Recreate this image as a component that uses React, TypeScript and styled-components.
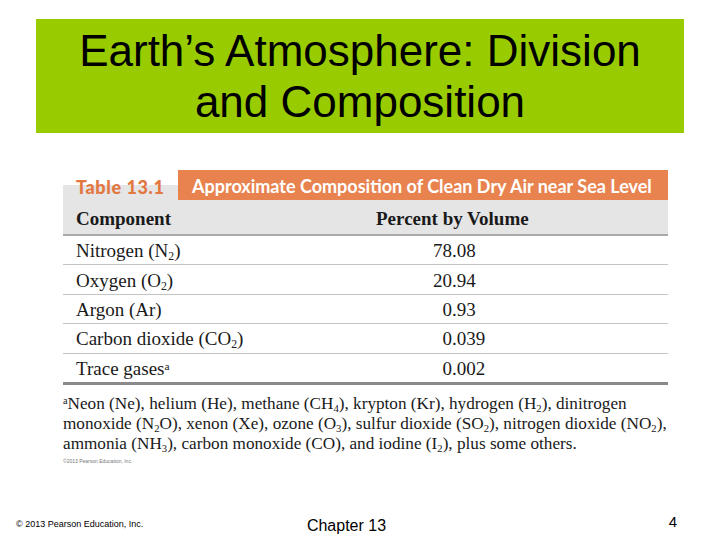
import React from "react";
import styled, { createGlobalStyle } from "styled-components";

const GlobalStyle = createGlobalStyle`
	html, body {
		margin: 0;
		padding: 0;
		background: #fff;
	}
	body {
		width: 720px;
		height: 540px;
		overflow: hidden;
		font-family: "Liberation Sans", Arial, sans-serif;
	}
`;

export default function App() {
	const rows = [
		{ name: <>Nitrogen (N<Sub>2</Sub>)</>, int: "78", frac: ".08" },
		{ name: <>Oxygen (O<Sub>2</Sub>)</>, int: "20", frac: ".94" },
		{ name: <>Argon (Ar)</>, int: "0", frac: ".93" },
		{ name: <>Carbon dioxide (CO<Sub>2</Sub>)</>, int: "0", frac: ".039" },
		{ name: <>Trace gases<Sup>a</Sup></>, int: "0", frac: ".002" },
	];

	return (
		<Slide>
			<GlobalStyle />
			<TitleBar>
				<Title>
					Earth’s Atmosphere: Division
					<br />
					and Composition
				</Title>
			</TitleBar>
			<Table>
				<Caption>
					<TableNo>Table 13.1</TableNo>
					<CaptionText>
						Approximate Composition of Clean Dry Air near Sea Level
					</CaptionText>
				</Caption>
				<HeadRow>
					<HeadCell>Component</HeadCell>
					<HeadCell>Percent by Volume</HeadCell>
				</HeadRow>
				{rows.map((r, i) => (
					<Row key={i} $last={i === rows.length - 1}>
						<Cell>{r.name}</Cell>
						<Num>
							<Int>{r.int}</Int>
							{r.frac}
						</Num>
					</Row>
				))}
				<Footnote>
					<Sup>a</Sup>Neon (Ne), helium (He), methane (CH<Sub>4</Sub>), krypton
					(Kr), hydrogen (H<Sub>2</Sub>), dinitrogen
					<br />
					monoxide (N<Sub>2</Sub>O), xenon (Xe), ozone (O<Sub>3</Sub>), sulfur
					dioxide (SO<Sub>2</Sub>), nitrogen dioxide (NO<Sub>2</Sub>),
					<br />
					ammonia (NH<Sub>3</Sub>), carbon monoxide (CO), and iodine
					(I<Sub>2</Sub>), plus some others.
				</Footnote>
				<Credit>©2013 Pearson Education, Inc.</Credit>
			</Table>
			<Footer>
				<Copyright>© 2013 Pearson Education, Inc.</Copyright>
				<Chapter>Chapter 13</Chapter>
				<PageNo>4</PageNo>
			</Footer>
		</Slide>
	);
}

const Slide = styled.div`
	width: 720px;
	height: 540px;
	display: flex;
	flex-direction: column;
	padding-top: 19px;
	box-sizing: border-box;
`;
const TitleBar = styled.div`
	margin: 0 36px;
	height: 114px;
	background: #99cc00;
	display: flex;
	align-items: center;
	justify-content: center;
`;
const Title = styled.h1`
	margin: 0;
	font-family: "Liberation Sans", Arial, sans-serif;
	font-weight: normal;
	font-size: 44px;
	line-height: 51px;
	text-align: center;
	color: #000;
`;
const Table = styled.div`
	margin: 37px 52px 0 63px;
	font-family: "Liberation Serif", "Times New Roman", serif;
	color: #1a1a1a;
`;
const Caption = styled.div`
	display: flex;
	height: 30px;
	background: linear-gradient(to bottom, #fff 0, #fff 15px, #e5e5e6 15px);
`;
const TableNo = styled.div`
	width: 115px;
	padding-left: 13px;
	box-sizing: border-box;
	font-family: "Lato", "Open Sans", sans-serif;
	font-weight: 900;
	font-size: 18px;
	color: #e2773f;
	line-height: 34px;
	letter-spacing: 0.6px;
	white-space: nowrap;
`;
const CaptionText = styled.div`
	flex: 1;
	background: #e8834f;
	color: #fff;
	font-family: "Lato", "Open Sans", sans-serif;
	font-weight: 700;
	font-size: 18px;
	line-height: 32px;
	padding-left: 14px;
	white-space: nowrap;
	overflow: hidden;
`;
const HeadRow = styled.div`
	display: grid;
	grid-template-columns: 300px 1fr;
	box-sizing: border-box;
	height: 36px;
	align-items: center;
	background: #e5e5e6;
	border-bottom: 2px solid #a9a9a9;
	padding: 3px 0 0 13px;
`;
const HeadCell = styled.div`
	font-weight: bold;
	font-size: 19px;
`;
const Row = styled.div<{ $last?: boolean }>`
	display: grid;
	grid-template-columns: 357px 1fr;
	box-sizing: border-box;
	height: ${(p) => (p.$last ? "31px" : "29.4px")};
	align-items: center;
	padding: 2px 0 0 13px;
	border-bottom: ${(p) => (p.$last ? "3px solid #8a8a8a" : "1px solid #c4c4c4")};
`;
const Cell = styled.div`
	font-size: 19px;
	white-space: nowrap;
`;
const Num = styled.div`
	font-size: 19px;
`;
const Int = styled.span`
	display: inline-block;
	width: 19px;
	text-align: right;
`;
const Sub = styled.sub`
	font-size: 0.62em;
	vertical-align: -0.25em;
	line-height: 0;
`;
const Sup = styled.sup`
	font-size: 0.6em;
	vertical-align: 0.45em;
	line-height: 0;
`;
const Footnote = styled.p`
	margin: 9px 0 0 0;
	font-size: 17.2px;
	line-height: 20px;
	color: #1a1a1a;
	white-space: nowrap;
`;
const Credit = styled.div`
	margin-top: 4px;
	font-family: "Liberation Sans", Arial, sans-serif;
	font-size: 5px;
	color: #777;
`;
const Footer = styled.div`
	margin-top: auto;
	height: 30px;
	display: grid;
	grid-template-columns: 1fr auto 1fr;
	align-items: start;
	padding: 0 43px 0 16px;
`;
const Copyright = styled.div`
	font-size: 9px;
	padding-top: 9px;
	color: #000;
`;
const Chapter = styled.div`
	font-size: 16px;
	padding-top: 7px;
	color: #000;
`;
const PageNo = styled.div`
	font-size: 15px;
	justify-self: end;
	padding-top: 3px;
	color: #000;
`;
